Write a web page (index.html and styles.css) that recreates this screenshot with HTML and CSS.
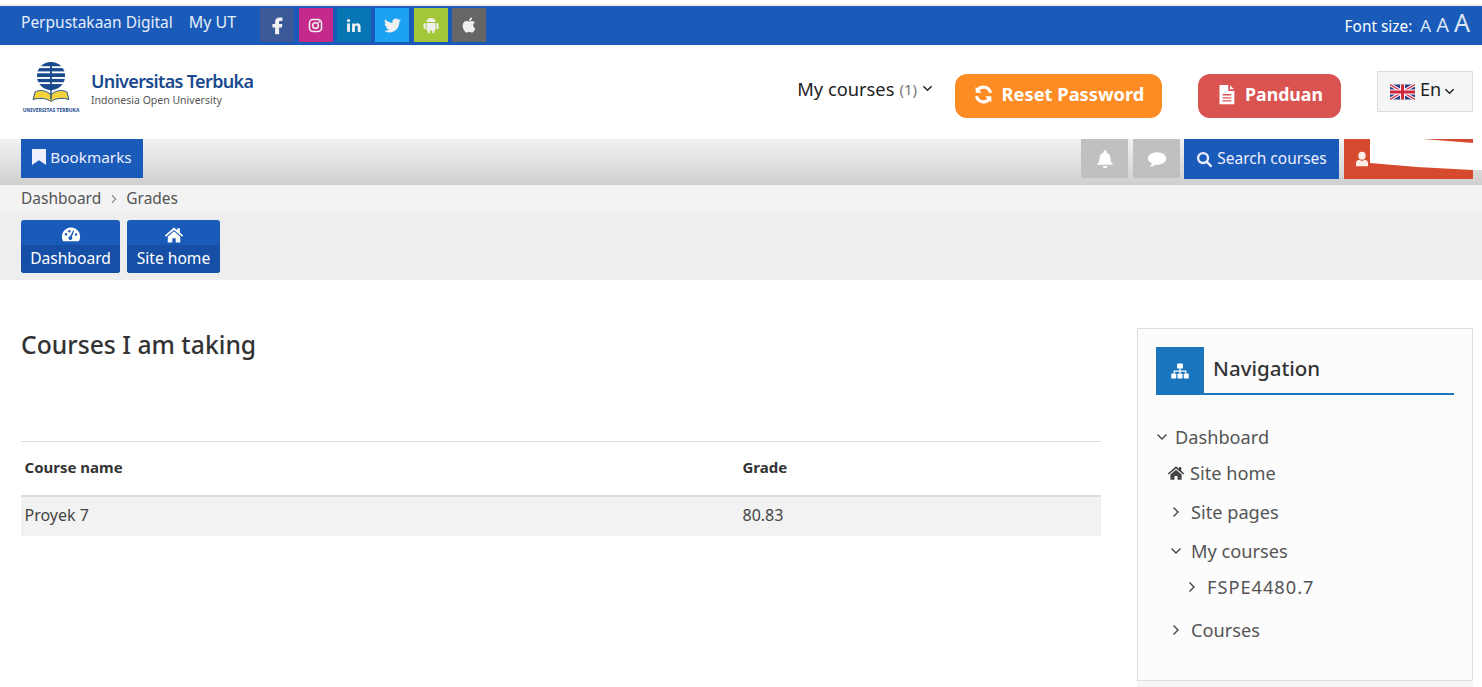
FILE: index.html
```html
<!DOCTYPE html>
<html lang="en">
<head>
<meta charset="utf-8">
<title>Grades</title>
<link rel="stylesheet" href="styles.css">
</head>
<body>
<div class="topstrip"></div>
<div class="topbar">
  <a class="toplink first">Perpustakaan Digital</a>
  <a class="toplink second">My UT</a>
  <div class="socials">
    <span class="soc fb"><svg viewBox="0 0 24 24"><path d="M14.500 8.800c0-1 .5-1.500 1.500-1.500h2.500V3h-3.300C11.500 3 9.700 5 9.700 8.300v2.400H6.500V15h3.200v8h4.800v-8h3.400l.6-4.300h-4z"/></svg></span>
    <span class="soc ig"><svg viewBox="0 0 24 24"><rect x="3.500" y="3.500" width="17" height="17" rx="5" class="st"/><circle cx="12" cy="12" r="4" class="st"/><circle cx="17" cy="7" r="1.200"/></svg></span>
    <span class="soc li"><svg viewBox="0 0 24 24"><rect x="3" y="9" width="4" height="12"/><circle cx="5" cy="5" r="2.300"/><path d="M10 9h3.800v1.700c.7-1.200 2-2 3.700-2 3.400 0 4.500 2.100 4.500 5.300V21h-4v-6.200c0-1.500-.4-2.700-1.900-2.700s-2.100 1.200-2.100 2.700V21h-4z"/></svg></span>
    <span class="soc tw"><svg viewBox="0 0 24 24"><path d="M23.953 4.57a10 10 0 01-2.825.775 4.958 4.958 0 002.163-2.723c-.951.555-2.005.959-3.127 1.184a4.92 4.92 0 00-8.384 4.482C7.69 8.095 4.067 6.13 1.64 3.162a4.822 4.822 0 00-.666 2.475c0 1.71.87 3.213 2.188 4.096a4.904 4.904 0 01-2.228-.616v.06a4.923 4.923 0 003.946 4.827 4.996 4.996 0 01-2.212.085 4.936 4.936 0 004.604 3.417 9.867 9.867 0 01-6.102 2.105c-.39 0-.779-.023-1.17-.067a13.995 13.995 0 007.557 2.209c9.053 0 13.998-7.496 13.998-13.985 0-.21 0-.42-.015-.63A9.935 9.935 0 0024 4.59z"/></svg></span>
    <span class="soc an"><svg viewBox="0 0 24 24"><path d="M6.500 8.500a5.500 5 0 0111 0z"/><rect x="6.500" y="9.500" width="11" height="9" rx="1"/><rect x="3" y="9.500" width="2.500" height="7.500" rx="1.200"/><rect x="18.500" y="9.500" width="2.500" height="7.500" rx="1.200"/><rect x="8" y="17" width="2.600" height="5" rx="1.300"/><rect x="13.400" y="17" width="2.600" height="5" rx="1.300"/></svg></span>
    <span class="soc ap"><svg viewBox="0 0 24 24"><path d="M17.050 20.280c-.98.95-2.050.8-3.080.35-1.090-.46-2.090-.48-3.240 0-1.440.62-2.200.44-3.060-.35C2.790 15.250 3.510 7.590 9.050 7.310c1.350.07 2.290.74 3.080.8 1.180-.24 2.310-.93 3.570-.84 1.510.12 2.650.72 3.400 1.800-3.120 1.870-2.380 5.980.48 7.130-.57 1.500-1.310 2.990-2.540 4.090zM12.030 7.250c-.15-2.230 1.660-4.070 3.740-4.250.29 2.580-2.340 4.500-3.740 4.250z"/></svg></span>
  </div>
  <div class="fontsize">
    <span class="fs-label">Font size:</span>
    <span class="fs-a s1">A</span><span class="fs-a s2">A</span><span class="fs-a s3">A</span>
  </div>
</div>

<header class="brandbar">
  <div class="logo">
    <div class="emblem">
      <svg viewBox="0 0 60 49" class="globe">
        <defs><clipPath id="gc"><circle cx="30" cy="15" r="15"/></clipPath></defs>
        <g clip-path="url(#gc)" fill="#1a4a8e">
          <rect x="10" y="0" width="40" height="4.500"/>
          <rect x="10" y="6.500" width="40" height="3.500"/>
          <rect x="10" y="12" width="40" height="4"/>
          <rect x="10" y="18" width="40" height="3.500"/>
          <rect x="10" y="23.500" width="40" height="7"/>
          <rect x="29" y="0" width="2" height="30"/>
        </g>
        <path d="M29 34C22 29 17 30 13 32l-2 8c6-2 13-2 19 2 6-4 13-4 19-2l-2-8c-4-2-9-3-16 2z" fill="#f4d23c" stroke="#1a4a8e" stroke-width="1"/>
        <path d="M30 26v14" stroke="#1a4a8e" stroke-width="1.500"/>
      </svg>
      <span class="emblem-text">UNIVERSITAS TERBUKA</span>
    </div>
    <div class="wordmark">
      <span class="wm-title">Universitas Terbuka</span>
      <span class="wm-sub">Indonesia Open University</span>
    </div>
  </div>
  <div class="brandnav">
    <div class="mycourses">My courses <span class="count">(1)</span><svg class="chev" viewBox="0 0 12 12"><path d="M1.500 3.500 6 8l4.500-4.500"/></svg></div>
    <a class="bigbtn orange"><svg class="ic-btn" viewBox="0 0 24 24"><path class="stw" d="M20 10a8.200 8.200 0 0 0-14.500-3.200M4 14a8.200 8.200 0 0 0 14.500 3.200"/><path d="M3 3v7h7zM21 21v-7h-7z"/></svg>Reset Password</a>
    <a class="bigbtn red"><svg class="ic-btn" viewBox="0 0 24 24"><path fill-rule="evenodd" d="M4 1h10v7h7v15H4zM16 1.500 20.500 6H16zM7.500 11.500v1.500h10v-1.500zM7.500 15v1.500h10V15zM7.500 18.500V20h10v-1.500z"/></svg>Panduan</a>
    <div class="lang">
      <svg class="flag" viewBox="0 0 60 36"><rect width="60" height="36" fill="#2b3f86"/><path d="M0 0l60 36M60 0 0 36" stroke="#fff" stroke-width="8"/><path d="M0 0l60 36M60 0 0 36" stroke="#d0263a" stroke-width="3"/><path d="M30 0v36M0 18h60" stroke="#fff" stroke-width="12"/><path d="M30 0v36M0 18h60" stroke="#d0263a" stroke-width="7"/></svg>
      <span>En</span><svg class="chev" viewBox="0 0 12 12"><path d="M1.500 3.500 6 8l4.500-4.500"/></svg>
    </div>
  </div>
</header>

<div class="toolbar">
  <a class="bookmarks"><svg class="ic-bm" viewBox="4 1 16 22" preserveAspectRatio="none"><path d="M4 1h16v22l-8-6.500L4 23z"/></svg>Bookmarks</a>
  <div class="tools">
    <span class="tool"><svg class="ic-tool" viewBox="0 0 24 24"><path d="M12 1.500a2 2 0 0 1 1.600 3c3.500.8 5 3.500 5 7 0 3.500 1 5.500 3.400 7.500H2c2.400-2 3.400-4 3.400-7.500 0-3.500 1.500-6.200 5-7a2 2 0 0 1 1.600-3zM9.300 20.500h5.400a2.700 2.700 0 0 1-5.400 0z"/></svg></span>
    <span class="tool"><svg class="ic-tool" viewBox="0 0 24 24"><path d="M12 4c6 0 11 3.300 11 7.500S18 19 12 19c-.8 0-1.500-.1-2.200-.2C8 20.300 6 21 3.500 21c1.200-1 2-2.300 2.200-3.800C3 15.900 1 13.900 1 11.500 1 7.300 6 4 12 4z"/></svg></span>
    <a class="search"><svg class="ic-17" viewBox="0 0 24 24"><circle cx="10" cy="10" r="7" class="stw3"/><path class="stw3" d="m15 15 7 7"/></svg><span class="tb-label">Search courses</span></a>
    <a class="usermenu"><svg class="ic-16" viewBox="0 0 24 24"><ellipse cx="12" cy="7" rx="5.500" ry="6"/><path d="M3 23v-5c0-3 2.500-5 5-5 1 1 2.500 1.500 4 1.500s3-.5 4-1.500c2.500 0 5 2 5 5v5z"/></svg><svg class="redact" viewBox="0 0 138 39" preserveAspectRatio="none"><path d="M26 0H79L129 4V0H138V31H129L73 28 26 24z"/></svg></a>
  </div>
</div>

<nav class="crumbs"><span>Dashboard</span><svg class="crumb-sep" viewBox="0 0 12 12"><path d="M3.500 1.500 8 6l-4.500 4.500"/></svg><span>Grades</span></nav>

<div class="quick">
  <a class="qbtn"><span class="qtop"><svg class="ic-19" viewBox="0 0 24 24"><path fill-rule="evenodd" d="M12 3a11 11 0 0 1 9.500 16.500H2.500A11 11 0 0 1 12 3zM6 9.500a1.500 1.500 0 1 0 0 3 1.500 1.500 0 0 0 0-3zM10 6a1.500 1.500 0 1 0 0 3 1.500 1.500 0 0 0 0-3zM18 10a1.500 1.500 0 1 0 0 3 1.500 1.500 0 0 0 0-3zM14.500 6.500 11 13.500a2.200 2.200 0 1 0 2 .8l2.800-7.300z"/></svg></span><span class="qlab">Dashboard</span></a>
  <a class="qbtn"><span class="qtop"><svg class="ic-19" viewBox="0 0 24 24"><path d="M12 3 1 12.500l1.300 1.500L12 6l9.700 8 1.300-1.500-4-3.500V4h-3v2.400z"/><path d="M12 7.500 4.500 14v7h5.500v-5h4v5h5.500v-7z"/></svg></span><span class="qlab">Site home</span></a>
</div>

<main class="content">
  <section class="main">
    <h1>Courses I am taking</h1>
    <table class="grades">
      <thead><tr><th class="c1">Course name</th><th>Grade</th></tr></thead>
      <tbody><tr><td>Proyek 7</td><td>80.83</td></tr></tbody>
    </table>
  </section>
  <aside class="side">
    <div class="card">
      <div class="cardhead">
        <span class="cardicon"><svg viewBox="0 0 24 24"><rect x="8.500" y="3" width="7" height="6" rx="1"/><rect x="1.500" y="15" width="6" height="6" rx="1"/><rect x="9" y="15" width="6" height="6" rx="1"/><rect x="16.500" y="15" width="6" height="6" rx="1"/><path d="M11.200 9h1.600v2.500h7v3.500h-1.600v-2h-5.400v2h-1.600v-2H5.800v2H4.200v-3.500h7z"/></svg></span>
        <h2>Navigation</h2>
      </div>
      <ul class="tree">
        <li class="r0"><svg class="tchev" viewBox="0 0 12 12"><path d="M1.500 3.500 6 8l4.500-4.500"/></svg>Dashboard</li>
        <li class="r1"><svg class="thome" viewBox="0 0 24 24"><path d="M12 3 1 12.500l1.300 1.500L12 6l9.700 8 1.300-1.500-4-3.500V4h-3v2.400z"/><path d="M12 7.500 4.500 14v7h5.500v-5h4v5h5.500v-7z"/></svg>Site home</li>
        <li class="r2"><svg class="tchev" viewBox="0 0 12 12"><path d="M3.500 1.500 8 6l-4.500 4.500"/></svg>Site pages</li>
        <li class="r3"><svg class="tchev" viewBox="0 0 12 12"><path d="M1.500 3.500 6 8l4.500-4.500"/></svg>My courses</li>
        <li class="r4"><svg class="tchev" viewBox="0 0 12 12"><path d="M3.500 1.500 8 6l-4.500 4.500"/></svg>FSPE4480.7</li>
        <li class="r5"><svg class="tchev" viewBox="0 0 12 12"><path d="M3.500 1.500 8 6l-4.500 4.500"/></svg>Courses</li>
      </ul>
    </div>
    <div class="sidefoot"></div>
  </aside>
</main>
</body>
</html>
```
FILE: styles.css
```css
* { box-sizing: border-box; }
html, body { margin: 0; padding: 0; }
body { height: 687px; overflow: hidden; background: #fff; color: #373a3c; font-family: "Noto Sans", "Open Sans", sans-serif; font-size: 16px; }
svg { fill: currentColor; flex: none; display: block; }
a { color: inherit; text-decoration: none; }
ul { list-style: none; margin: 0; padding: 0; }
h1, h2 { margin: 0; font-weight: 400; }

.topstrip { height: 6px; background: #fff; border-bottom: 2px solid #f1f2e6; }
.topbar { height: 39px; background: #1a5ab8; color: #e6eefa; display: flex; align-items: flex-start; padding: 0 12px 0 21px; }
.toplink { line-height: 20px; margin-top: 6px; }
.first { font-size: 15.500px; }
.second { font-size: 16px; margin-left: 16px; }
.socials { display: flex; gap: 4.400px; margin-left: 24px; margin-top: 2px; }
.soc { width: 34px; height: 34px; display: flex; align-items: center; justify-content: center; color: #f0f0f0; }
.soc svg { width: 17px; height: 17px; }
.soc.fb svg, .soc.an svg, .soc.ap svg { width: 20px; height: 20px; }
.soc .st { fill: none; stroke: currentColor; stroke-width: 2.200; }
.fb { background: #3b5998; }
.ig { background: #c32a8a; }
.li { background: #0976b4; }
.tw { background: #1da1f2; }
.an { background: #a4c639; }
.ap { background: #666; }
.fontsize { margin-left: auto; margin-top: 4px; display: flex; align-items: baseline; color: #fff; }
.fs-label { font-size: 15.400px; margin-right: 3px; }
.fs-a { color: #dbe6f7; margin-left: 5px; line-height: 1; }
.s1 { font-size: 17px; }
.s2 { font-size: 20px; }
.s3 { font-size: 25px; }

.brandbar { height: 94px; display: flex; align-items: flex-start; padding: 0 9px 0 21px; background: #fff; }
.logo { display: flex; margin-top: 17px; }
.emblem { width: 60px; display: flex; flex-direction: column; align-items: center; }
.globe { width: 60px; height: 46px; }
.emblem-text { font-size: 5px; font-weight: 700; color: #1a4a8e; white-space: nowrap; line-height: 6px; margin-top: -1px; }
.wordmark { display: flex; flex-direction: column; margin-left: 10px; margin-top: 8px; }
.wm-title { font-size: 18px; font-weight: 600; color: #1a4a8e; line-height: 22px; letter-spacing: -0.650px; }
.wm-sub { font-size: 10.500px; color: #555; line-height: 14px; margin-top: 1px; }
.brandnav { margin-left: auto; display: flex; align-items: flex-start; }
.mycourses { font-size: 18.300px; color: #222; margin-top: 31px; display: flex; align-items: center; gap: 5px; white-space: nowrap; }
.count { font-size: 15px; color: #777; }
.chev { width: 11px; height: 11px; fill: none; stroke: #222; stroke-width: 1.600; }
.bigbtn { height: 44px; margin-top: 29px; padding-bottom: 5px; border-radius: 12px; color: #fff; font-weight: 700; font-size: 18.300px; display: flex; align-items: center; gap: 8px; justify-content: center; }
.orange { background: #fd8c25; width: 207px; margin-left: 22px; }
.red { background: #d95350; width: 143px; margin-left: 36px; font-size: 17.700px; }
.ic-btn { width: 21px; height: 21px; margin-top: 1px; }
.stw { fill: none; stroke: #fff; stroke-width: 3.600; }
.lang { width: 96px; height: 41px; margin-top: 26px; margin-left: 36px; padding: 0 0 5px 12px; background: #f5f5f5; border: 1px solid #ddd; display: flex; align-items: center; font-size: 18px; color: #222; }
.flag { width: 25px; height: 16px; margin: 5px 5px 0 0; }
.lang .chev { margin: 4px 0 0 3px; }

.toolbar { height: 46px; background: linear-gradient(#f2f2f2, #cfcfcf); display: flex; justify-content: space-between; padding: 0 9px 0 21px; align-items: flex-start; }
.bookmarks { width: 122px; height: 39px; padding-bottom: 3px; background: #1a5ab8; color: #eef; display: flex; align-items: center; justify-content: center; gap: 4px; font-size: 15.300px; }
.ic-bm { width: 14px; height: 16px; }
.ic-16 { width: 16px; height: 16px; }
.ic-17 { width: 17px; height: 17px; }
.ic-tool { width: 20px; height: 20px; }
.tools { display: flex; }
.tool { width: 47px; height: 39px; background: #c0c0c0; color: #fff; display: flex; align-items: center; justify-content: center; margin-right: 5px; }
.tool + .tool { margin-right: 4px; }
.search { width: 155px; height: 40px; background: #1a5ab8; color: #eef; display: flex; align-items: center; justify-content: center; gap: 4px; font-size: 15.500px; margin-right: 5px; }
.tb-label { margin-top: -2px; }
.stw3 { fill: none; stroke: currentColor; stroke-width: 3.400; }
.usermenu { position: relative; width: 129px; height: 40px; background: #d64b30; color: #fdeee8; display: flex; align-items: center; padding-left: 10px; }
.redact { position: absolute; left: 0; top: 0; width: 138px; height: 39px; fill: #fff; }

.crumbs { height: 28px; padding: 0 0 2px 21px; background: #f3f3f3; display: flex; align-items: center; font-size: 15.500px; color: #555; }
.crumb-sep { width: 10px; height: 10px; margin: 2px 7px 0 8px; fill: none; stroke: #888; stroke-width: 1.300; }

.quick { height: 67px; background: #eee; display: flex; gap: 7px; padding: 7px 0 0 21px; align-items: flex-start; }
.qbtn { height: 53px; border-radius: 3px; background: #1a5ab8; color: #fff; display: flex; flex-direction: column; align-items: center; overflow: hidden; }
.qbtn:nth-child(1) { width: 99px; }
.qbtn:nth-child(2) { width: 93px; }
.qtop { height: 25px; width: 100%; padding-top: 4px; display: flex; align-items: center; justify-content: center; }
.ic-19 { width: 20px; height: 20px; }
.qlab { flex: 1; width: 100%; background: #174fa6; font-size: 15.600px; text-align: center; line-height: 27px; }

.content { display: flex; align-items: flex-start; padding: 47px 9px 0 21px; }
.main { width: 1080px; }
h1 { font-size: 24.700px; line-height: 36px; color: #333; font-weight: 500; }
.grades { margin-top: 78px; width: 100%; border-collapse: collapse; font-size: 16px; border-top: 1px solid #ddd; }
.grades th { text-align: left; font-weight: 700; font-size: 15px; height: 54px; padding: 0 4px 2px 3.500px; border-bottom: 2px solid #ddd; color: #333; }
.grades td { height: 40px; background: #f2f2f2; padding: 0 4px 2px 3.500px; color: #444; }
.c1 { width: 718px; }

.side { width: 336px; margin-left: 36px; margin-top: 1px; }
.card { height: 353px; background: #fcfcfc; border: 1px solid #ddd; padding: 18px 18px 0; }
.sidefoot { height: 6px; background: #f7f7f7; }
.cardhead { display: flex; border-bottom: 2px solid #1b75bc; height: 48px; }
.cardicon { width: 48px; height: 48px; background: #1b75bc; color: #fff; display: flex; align-items: center; justify-content: center; }
.cardicon svg { width: 20px; height: 20px; }
h2 { font-size: 20.500px; font-weight: 500; line-height: 42px; margin-left: 9px; color: #333; }
.tree { margin-top: 29px; font-size: 18.200px; color: #555; }
.tree li { display: flex; align-items: center; line-height: 26px; }
.tchev { width: 12px; height: 12px; fill: none; stroke: #444; stroke-width: 1.400; margin-right: 9px; }
.r0 .tchev { margin-right: 7px; }
.thome { width: 18px; height: 18px; margin-right: 5px; color: #444; }
.r1 { margin-top: 10px; padding-left: 11px; }
.r2 { margin-top: 13px; padding-left: 14px; }
.r3 { margin-top: 13px; padding-left: 14px; }
.r4 { margin-top: 10px; padding-left: 30px; letter-spacing: 1px; }
.r5 { margin-top: 17px; padding-left: 14px; }
```
